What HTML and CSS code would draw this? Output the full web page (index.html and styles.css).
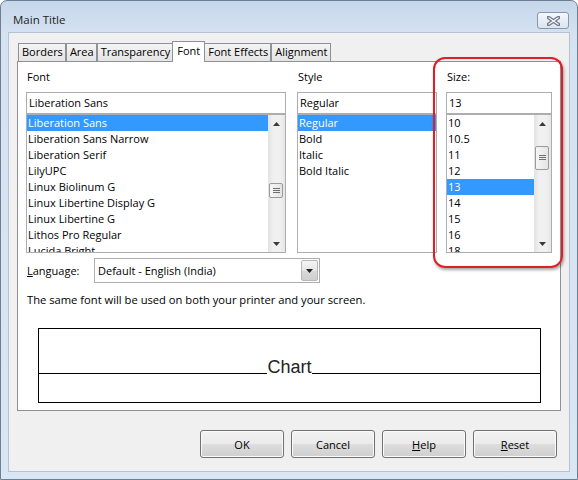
FILE: index.html
```html
<!DOCTYPE html>
<html>
<head>
<meta charset="utf-8">
<link rel="stylesheet" href="styles.css">
</head>
<body>
<div class="window">
  <div class="titlebar">
    <span class="title">Main Title</span>
    <div class="close">
      <svg width="13" height="10" viewBox="0 0 13 10">
        <path d="M1.5 1.5 L11.5 8.5 M11.5 1.5 L1.5 8.5" stroke="#6d7a8b" stroke-width="3.6" stroke-linecap="square" fill="none"/>
        <path d="M1.5 1.5 L11.5 8.5 M11.5 1.5 L1.5 8.5" stroke="#f4f6f9" stroke-width="1.3" stroke-linecap="butt" fill="none"/>
      </svg>
    </div>
  </div>
  <div class="client">
    <div class="tabs">
      <div class="tab">Borders</div>
      <div class="tab">Area</div>
      <div class="tab">Transparency</div>
      <div class="tab active">Font</div>
      <div class="tab">Font Effects</div>
      <div class="tab">Alignment</div>
    </div>
    <div class="panel">
      <div class="fontgrid">
        <div class="col col-font">
          <div class="label">Font</div>
          <div class="input">Liberation Sans</div>
          <div class="listbox">
            <div class="items">
              <div class="item sel">Liberation Sans</div>
              <div class="item">Liberation Sans Narrow</div>
              <div class="item">Liberation Serif</div>
              <div class="item">LilyUPC</div>
              <div class="item">Linux Biolinum G</div>
              <div class="item">Linux Libertine Display G</div>
              <div class="item">Linux Libertine G</div>
              <div class="item">Lithos Pro Regular</div>
              <div class="item">Lucida Bright</div>
            </div>
            <div class="scrollbar">
              <div class="sb-btn"><svg width="7" height="4" viewBox="0 0 7 4"><path d="M0 4 L3.5 0 L7 4Z" fill="#3a3a3a"/></svg></div>
              <div class="sb-track">
                <div class="thumb thumb-font">
                  <svg width="7" height="6" viewBox="0 0 7 6"><path d="M0 0.5H7M0 2.5H7M0 4.5H7" stroke="#6f6f6f" stroke-width="1" fill="none"/></svg>
                </div>
              </div>
              <div class="sb-btn"><svg width="7" height="4" viewBox="0 0 7 4"><path d="M0 0 L3.5 4 L7 0Z" fill="#3a3a3a"/></svg></div>
            </div>
          </div>
        </div>
        <div class="col col-style">
          <div class="label">Style</div>
          <div class="input">Regular</div>
          <div class="listbox">
            <div class="items">
              <div class="item sel">Regular</div>
              <div class="item">Bold</div>
              <div class="item">Italic</div>
              <div class="item">Bold Italic</div>
            </div>
          </div>
        </div>
        <div class="col col-size">
          <div class="label">Size:</div>
          <div class="input">13</div>
          <div class="listbox">
            <div class="items">
              <div class="item">10</div>
              <div class="item">10.5</div>
              <div class="item">11</div>
              <div class="item">12</div>
              <div class="item sel">13</div>
              <div class="item">14</div>
              <div class="item">15</div>
              <div class="item">16</div>
              <div class="item">18</div>
            </div>
            <div class="scrollbar">
              <div class="sb-btn"><svg width="7" height="4" viewBox="0 0 7 4"><path d="M0 4 L3.5 0 L7 4Z" fill="#3a3a3a"/></svg></div>
              <div class="sb-track">
                <div class="thumb thumb-size">
                  <svg width="7" height="6" viewBox="0 0 7 6"><path d="M0 0.5H7M0 2.5H7M0 4.5H7" stroke="#6f6f6f" stroke-width="1" fill="none"/></svg>
                </div>
              </div>
              <div class="sb-btn"><svg width="7" height="4" viewBox="0 0 7 4"><path d="M0 0 L3.5 4 L7 0Z" fill="#3a3a3a"/></svg></div>
            </div>
          </div>
        </div>
      </div>
      <div class="lang-row">
        <div class="lang-label"><span class="u">L</span>anguage:</div>
        <div class="combo">
          <span class="combo-text">Default - English (India)</span>
          <div class="combo-btn"><svg width="7" height="4" viewBox="0 0 7 4"><path d="M0 0 L3.5 4 L7 0Z" fill="#222"/></svg></div>
        </div>
      </div>
      <p class="note">The same font will be used on both your printer and your screen.</p>
      <div class="preview">
        <div class="preview-top"><span class="chart">Chart</span></div>
        <div class="preview-bottom"></div>
      </div>
    </div>
    <div class="buttons">
      <div class="btn">OK</div>
      <div class="btn">Cancel</div>
      <div class="btn"><span class="u">H</span>elp</div>
      <div class="btn"><span class="u">R</span>eset</div>
    </div>
  </div>
  <div class="highlight"></div>
</div>
</body>
</html>
```

FILE: styles.css
```css
* { box-sizing: border-box; }
html, body { margin: 0; padding: 0; }
body {
  width: 578px;
  height: 480px;
  overflow: hidden;
  background: #ffffff;
  font-family: "Open Sans", "Noto Sans", sans-serif;
  font-size: 11px;
  color: #000;
}
.window {
  position: relative;
  width: 578px;
  height: 480px;
  border: 1px solid #6f7f92;
  border-radius: 7px 7px 0 0;
  background: linear-gradient(#c6d7eb 0, #d4e2f1 32px, #d9e6f4 100%);
  display: flex;
  flex-direction: column;
}
.titlebar {
  flex: none;
  height: 31px;
  display: flex;
  align-items: flex-start;
  justify-content: space-between;
  padding: 0 8px 0 12px;
}
.title {
  margin-top: 11px;
  font-size: 11.5px;
  line-height: 16px;
  color: #222;
}
.close {
  margin-top: 11px;
  width: 32px;
  height: 17px;
  border: 1px solid #8796aa;
  border-radius: 3px;
  background: linear-gradient(#f5f8fb, #dce4ee);
  display: flex;
  align-items: center;
  justify-content: center;
}
.client {
  flex: 1;
  margin: 0 7px 7px 7px;
  background: #f0f0f0;
  border: 1px solid #b4c2d3;
  padding: 8px 8px 0 8px;
  display: flex;
  flex-direction: column;
}
.tabs {
  display: flex;
  align-items: flex-end;
  height: 20px;
  margin-left: 1px;
}
.tab {
  height: 18px;
  padding: 0 2px 0 3px;
  border: 1px solid #8e9198;
  border-bottom: none;
  background: linear-gradient(#f4f4f4, #e4e4e4);
  line-height: 16px;
  white-space: nowrap;
}
.tab.active {
  position: relative;
  z-index: 1;
  height: 21px;
  margin: 0 -1px -1px -1px;
  padding: 1px 4px 0;
  background: #fff;
}
.panel {
  height: 350px;
  background: #fff;
  border: 1px solid #8e9198;
  padding: 7px 8px 0 8px;
  display: flex;
  flex-direction: column;
}
.fontgrid { display: flex; }
.col-font { width: 260px; margin-right: 11px; }
.col-style { width: 140px; margin-right: 9px; }
.col-size { width: 106px; }
.label {
  height: 16px;
  line-height: 16px;
  margin-bottom: 7px;
  padding-left: 1px;
}
.input {
  height: 22px;
  border: 1px solid #abadb3;
  line-height: 20px;
  padding: 0 2px;
  background: #fff;
  white-space: nowrap;
}
.listbox {
  height: 139px;
  border: 1px solid #abadb3;
  display: flex;
  overflow: hidden;
}
.items { flex: 1; overflow: hidden; }
.item {
  height: 16px;
  line-height: 16px;
  padding-left: 1px;
  white-space: nowrap;
}
.item.sel { background: #3399ff; color: #fff; }
.scrollbar {
  width: 17px;
  flex: none;
  display: flex;
  flex-direction: column;
  background: linear-gradient(to right, #e2e2e2, #f0f0f0 30%, #f0f0f0 70%, #e6e6e6);
}
.sb-btn {
  height: 17px;
  display: flex;
  align-items: center;
  justify-content: center;
}
.sb-track { flex: 1; }
.thumb {
  width: 14px;
  margin-left: 1px;
  border: 1px solid #9a9a9a;
  border-radius: 2px;
  background: linear-gradient(to right, #f6f6f6, #e4e4e4);
  display: flex;
  align-items: center;
  justify-content: center;
}
.thumb-font { margin-top: 51px; height: 15px; }
.thumb-size { margin-top: 14px; height: 24px; }
.lang-row {
  display: flex;
  align-items: center;
  margin-top: 5px;
  height: 25px;
}
.lang-label { width: 68px; padding-left: 1px; }
.u { text-decoration: underline; }
.combo {
  width: 226px;
  height: 25px;
  border: 1px solid #abadb3;
  background: #fff;
  display: flex;
  align-items: center;
  justify-content: space-between;
  padding: 0 0 0 3px;
}
.combo-btn {
  width: 17px;
  height: 21px;
  margin-right: 1px;
  border: 1px solid #b8b8b8;
  border-radius: 2px;
  background: linear-gradient(#f5f5f5, #e6e6e6 50%, #d8d8d8 51%, #cfcfcf);
  display: flex;
  align-items: center;
  justify-content: center;
}
.note {
  margin: 9px 0 0 1px;
  line-height: 16px;
  font-size: 11.2px;
}
.preview {
  margin: 20px 0 0 12px;
  width: 503px;
  height: 75px;
  border: 1px solid #000;
  display: flex;
  flex-direction: column;
}
.preview-top {
  height: 45px;
  border-bottom: 1px solid #000;
  display: flex;
  align-items: flex-end;
  justify-content: center;
}
.chart {
  font-family: "Liberation Sans", Arial, sans-serif;
  font-size: 18px;
  line-height: 18px;
  color: #222;
  margin-bottom: -3px;
  background: #fff;
}
.buttons {
  display: flex;
  justify-content: flex-end;
  gap: 7px;
  margin-top: 19px;
  padding-right: 4px;
}
.btn {
  width: 84px;
  height: 28px;
  border: 1px solid #707070;
  border-radius: 3px;
  background: linear-gradient(#f2f2f2 0%, #ebebeb 48%, #dddddd 52%, #cfcfcf 100%);
  box-shadow: inset 0 0 0 1px #fbfbfb;
  display: flex;
  align-items: center;
  justify-content: center;
}
.highlight {
  position: absolute;
  left: 432px;
  top: 56px;
  width: 130px;
  height: 211px;
  border: 2px solid #dc2027;
  border-radius: 12px;
  box-shadow: 1px 2px 3px rgba(0, 0, 0, 0.35), inset 0 0 1px rgba(120, 0, 0, 0.3);
  pointer-events: none;
}
```
